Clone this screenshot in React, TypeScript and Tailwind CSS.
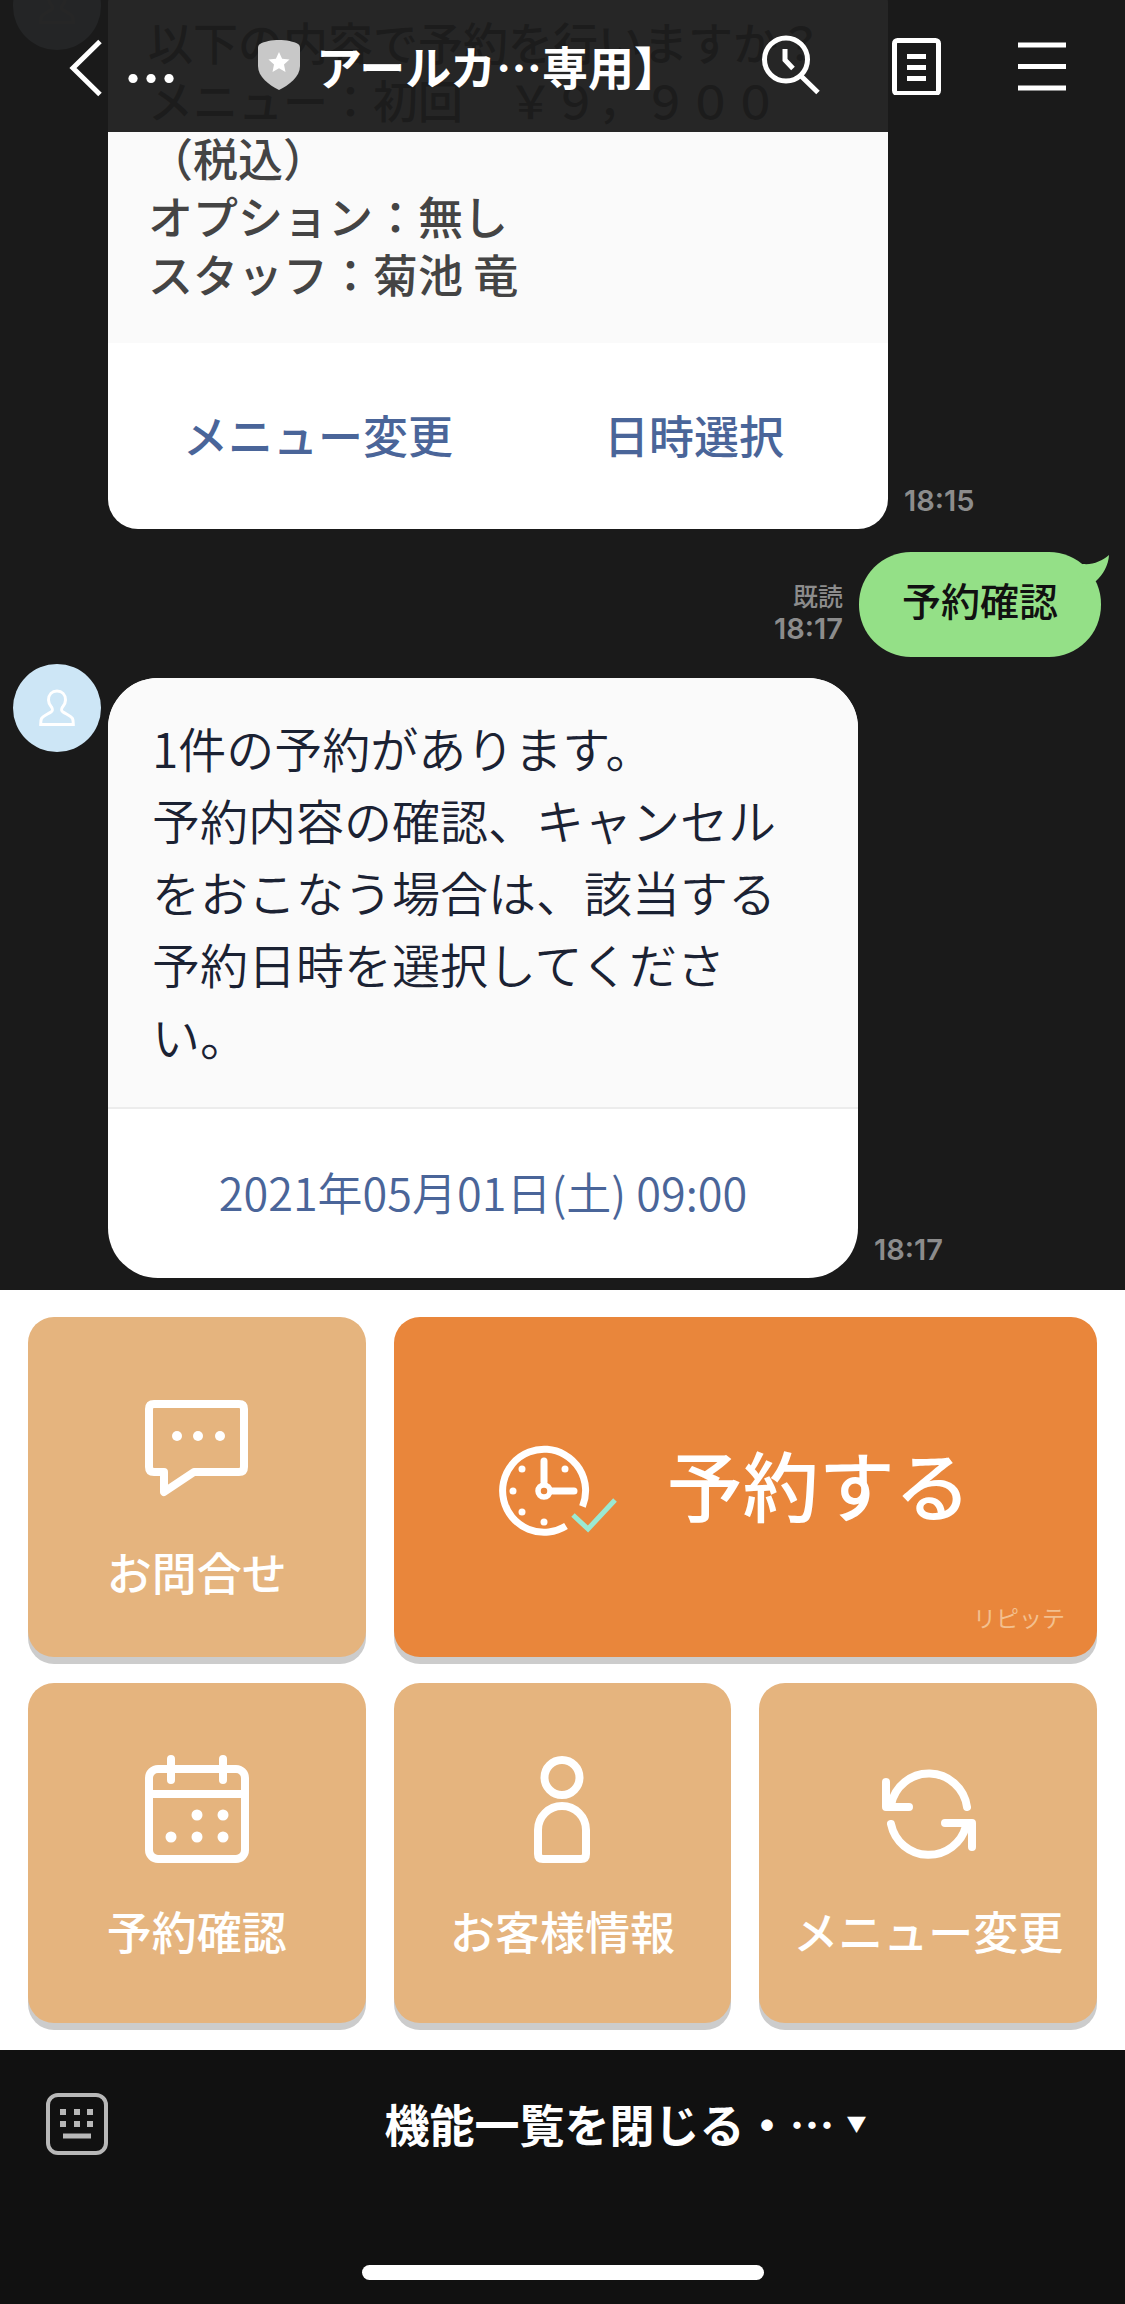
import { ReactNode } from 'react'

const Avatar = () => (
  <div className="flex h-[88px] w-[88px] shrink-0 items-center justify-center rounded-full bg-[#cde6f6]">
    <svg viewBox="0 0 36 38" className="h-[38px] w-[36px]" fill="none" stroke="#fff" strokeWidth="3">
      <path d="M18 2c-5 0-8.500 3.500-8.500 9 0 3.500 1.500 5 3 7 1.500 2.500 1.500 3.500-.5 5-4 2.500-8 4-9.500 6.500-.8 1.500-.8 3-.8 6h32.600c0-3 0-4.500-.8-6-1.500-2.500-5.500-4-9.500-6.500-2-1.500-2-2.500-.5-5 1.500-2 3-3.500 3-7 0-5.500-3.500-9-8.500-9z" />
    </svg>
  </div>
)

const Time = ({ children }: { children: ReactNode }) => (
  <time className="font-[Inter,'Noto_Sans_CJK_JP',sans-serif] text-[29px] font-semibold leading-8 text-[#8c8c8c]">
    {children}
  </time>
)

type BotMessageProps = {
  time: string
  className: string
  children: ReactNode
}
const BotMessage = ({ time, className, children }: BotMessageProps) => (
  <li className="flex items-start pl-[13px]">
    <Avatar />
    <div className="ml-[7px] mt-[14px] flex min-w-0 flex-1 items-end">
      <div className={className}>{children}</div>
      <div className="ml-4 pb-3">
        <Time>{time}</Time>
      </div>
    </div>
  </li>
)

type TileProps = {
  label: string
  className: string
  children: ReactNode
}
const Tile = ({ label, className, children }: TileProps) => (
  <button
    type="button"
    className={`flex h-[340px] flex-col items-center rounded-[26px] bg-[#e5b47e] shadow-[0_7px_0_#cccccc] ${className}`}
  >
    <svg
      viewBox="0 0 110 110"
      className="h-[110px] w-[110px]"
      fill="none"
      stroke="#fff"
      strokeWidth="8"
      strokeLinecap="round"
      strokeLinejoin="round"
    >
      {children}
    </svg>
    <span className="mt-[38px] whitespace-nowrap text-[45px] font-medium leading-[60px] text-white">{label}</span>
  </button>
)

const Header = () => (
  <header className="absolute inset-x-0 top-0 flex h-[132px] items-start bg-[#1a1a1a]/95 pl-[66px] pr-[53px] text-white">
    <button type="button" aria-label="戻る" className="mt-[38px] flex h-[60px]">
      <svg viewBox="0 0 40 60" className="h-[60px] w-[40px]" fill="none" stroke="#fff" strokeWidth="5">
        <path d="M34 3.500 7 30l27 26.500" />
      </svg>
    </button>
    <span className="ml-[18px] mt-[34px] font-[Inter,sans-serif] text-[54px] font-bold leading-[60px]">...</span>
    <div className="ml-[79px] mt-[35px] flex items-center">
      <svg viewBox="0 0 44 50" className="h-[50px] w-[44px]">
        <path d="M22 0c7 0 15 1.500 19 4 1.500 1 2 2 2 4v18c0 11-11 19-21 24C12 45 1 37 1 26V8c0-2 .5-3 2-4 4-2.500 12-4 19-4z" fill="#c8c8c8" />
        <path d="m22 12 3.100 6.800 7.400.8-5.500 5 1.500 7.300-6.500-3.700-6.500 3.700 1.500-7.300-5.500-5 7.400-.8z" fill="#fff" />
      </svg>
      <h1 className="ml-[15px] whitespace-nowrap text-[46px] font-bold leading-[60px]">アールカ…専用】</h1>
    </div>
    <nav className="ml-auto mt-[35px] flex gap-[66px]">
      <button type="button" aria-label="検索">
        <svg viewBox="0 0 60 60" className="h-[60px] w-[60px]" fill="none" stroke="#fff" strokeWidth="5">
          <circle cx="26" cy="24.500" r="21.500" />
          <path d="M25 14v11l8 8.500M41 41l17 16.500" />
        </svg>
      </button>
      <button type="button" aria-label="ノート">
        <svg viewBox="0 0 60 60" className="h-[60px] w-[60px]" fill="none" stroke="#fff" strokeWidth="5">
          <rect x="8.500" y="5.500" width="44" height="53" rx="3" />
          <path d="M21 21.500h19M21 32.500h19M21 43.500h19" />
        </svg>
      </button>
      <button type="button" aria-label="メニュー">
        <svg viewBox="0 0 60 60" className="h-[60px] w-[60px]" stroke="#fff" strokeWidth="5">
          <path d="M6 10h48M6 31.500h48M6 53h48" />
        </svg>
      </button>
    </nav>
  </header>
)

const Chat = () => (
  <ul className="-mt-[38px] flex flex-col pb-3">
    <BotMessage time="18:15" className="w-full max-w-[780px] overflow-hidden rounded-[30px] bg-white">
      <p className="bg-[#fafafa] pb-10 pl-10 pt-[37px] text-[45px] font-medium leading-[58px] text-[#444]">
        以下の内容で予約を行いますか？
        <br />
        メニュー：初回　￥９，９００
        <br />
        （税込）
        <br />
        オプション：無し
        <br />
        スタッフ：菊池 竜
      </p>
      <div className="grid h-[186px] grid-cols-2 pb-[2px] pl-[22px] pr-[6px] text-[45px] font-medium text-[#4a6599]">
        <button type="button">メニュー変更</button>
        <button type="button">日時選択</button>
      </div>
    </BotMessage>

    <li className="mt-[23px] flex items-end justify-end pr-6">
      <div className="mr-4 flex flex-col items-end pb-3">
        <span className="pb-[2px] text-[25px] font-medium leading-8 text-[#8c8c8c]">既読</span>
        <Time>18:17</Time>
      </div>
      <div className="relative flex h-[105px] items-center rounded-[52px] bg-[#94e087] px-[43px]">
        <p className="pb-3 text-[39px] font-medium leading-[52px] text-[#111]">予約確認</p>
        <svg viewBox="0 0 36 34" className="absolute -right-[10px] top-0 h-[34px] w-[36px]" fill="#94e087">
          <path d="M0 14 8 12C18 13 27 9 34 3c-.5 10-6 20-13 26L8 32z" />
        </svg>
      </div>
    </li>

    <li aria-hidden="true" className="h-[7px]" />

    <BotMessage time="18:17" className="w-full max-w-[750px] overflow-hidden rounded-[50px] bg-white">
      <p className="border-b-2 border-[#ececec] bg-[#fafafa] px-11 pb-9 pt-[33px] text-[48px] font-[350] leading-[72px] text-[#1b2233]">
        1件の予約があります。
        <br />
        予約内容の確認、キャンセルをおこなう場合は、該当する予約日時を選択してください。
      </p>
      <button type="button" className="h-[169px] w-full pb-1 text-[45px] font-[350] text-[#4a6599]">
        2021年05月01日(土) 09:00
      </button>
    </BotMessage>
  </ul>
)

const RichMenu = () => (
  <section className="grid grid-cols-3 gap-x-7 gap-y-[26px] bg-white px-7 py-[27px]">
    <Tile label="お問合せ" className="pt-[77px]">
      <path d="M12 10h85q5 0 5 5v58q0 5-5 5H52L22 98V78H12q-5 0-5-5V15q0-5 5-5z" />
      <g fill="#fff" stroke="none">
        <circle cx="35" cy="42" r="5" />
        <circle cx="56" cy="42" r="5" />
        <circle cx="78" cy="42" r="5" />
      </g>
    </Tile>
    <button
      type="button"
      className="col-span-2 flex h-[340px] flex-col rounded-[26px] bg-[#e9863b] px-8 pb-[22px] shadow-[0_7px_0_#cccccc]"
    >
      <span className="flex w-full items-center pl-[69px] pt-[120px]">
        <svg viewBox="0 0 124 100" className="h-[100px] w-[124px] shrink-0" fill="none" stroke="#fff" strokeWidth="7">
          <path d="M87.500 69.500A41.500 41.500 0 1 0 71 89" />
          <path d="M49 24v21M58 54h21" strokeLinecap="round" />
          <circle cx="49" cy="54" r="6" strokeWidth="5.500" />
          <g fill="#fff" stroke="none">
            <circle cx="27" cy="32" r="3.500" />
            <circle cx="70" cy="32" r="3.500" />
            <circle cx="18" cy="54" r="3.500" />
            <circle cx="27" cy="75" r="3.500" />
            <circle cx="49" cy="85" r="3.500" />
          </g>
          <path d="m78 78 15 14 27-29" stroke="#9be9d2" strokeWidth="5" />
        </svg>
        <span className="ml-12 whitespace-nowrap pb-2 text-[76px] font-medium leading-[92px] text-white">予約する</span>
      </span>
      <span className="mt-auto self-end text-[23px] leading-[36px] text-[#f3c08f]">リピッテ</span>
    </button>
    <Tile label="予約確認" className="pt-[70px]">
      <rect x="7" y="16" width="96" height="90" rx="9" />
      <path d="M7 41h96M29 6v21M81 6v21" />
      <g fill="#fff" stroke="none">
        <circle cx="55" cy="62" r="5.500" />
        <circle cx="81" cy="62" r="5.500" />
        <circle cx="29" cy="84" r="5.500" />
        <circle cx="55" cy="84" r="5.500" />
        <circle cx="81" cy="84" r="5.500" />
      </g>
    </Tile>
    <Tile label="お客様情報" className="pt-[70px]">
      <circle cx="55" cy="24.500" r="17.500" />
      <path d="M31 77a24 24 0 0 1 48 0v24q0 5-5 5H36q-5 0-5-5z" />
    </Tile>
    <Tile label="メニュー変更" className="pt-[70px]">
      <path d="M94 54A38.500 38.500 0 0 0 18 52M13 29v25h23M18 71a38.500 38.500 0 0 0 75 2M72 70h27v24" />
    </Tile>
  </section>
)

const Footer = () => (
  <footer className="flex flex-1 flex-col bg-[#111] pb-6 text-white">
    <div className="flex items-center pl-[46px] pr-[62px] pt-10">
      <button type="button" aria-label="キーボード">
        <svg viewBox="0 0 62 62" className="h-[62px] w-[62px]" fill="none" stroke="#b8b8b8" strokeWidth="4">
          <rect x="2" y="2" width="58" height="58" rx="10" />
          <path d="M14 19h6M28 19h6M41 19h6M14 31h6M28 31h6M41 31h6" strokeWidth="6" />
          <path d="M17 43h28" strokeWidth="5" />
        </svg>
      </button>
      <button type="button" className="flex flex-1 items-center justify-center pl-[80px]">
        <span className="whitespace-nowrap text-[45px] font-bold leading-[68px]">機能一覧を閉じる・…</span>
        <span className="ml-3 text-[20px]">▼</span>
      </button>
    </div>
    <div className="mx-auto mt-auto h-[15px] w-[402px] rounded-full bg-white" />
  </footer>
)

export default function App() {
  return (
    <div
      lang="ja"
      className="relative flex min-h-screen flex-col overflow-hidden bg-[#1a1a1a] font-['Noto_Sans_CJK_JP',sans-serif]"
    >
      <Chat />
      <Header />
      <RichMenu />
      <Footer />
    </div>
  )
}
